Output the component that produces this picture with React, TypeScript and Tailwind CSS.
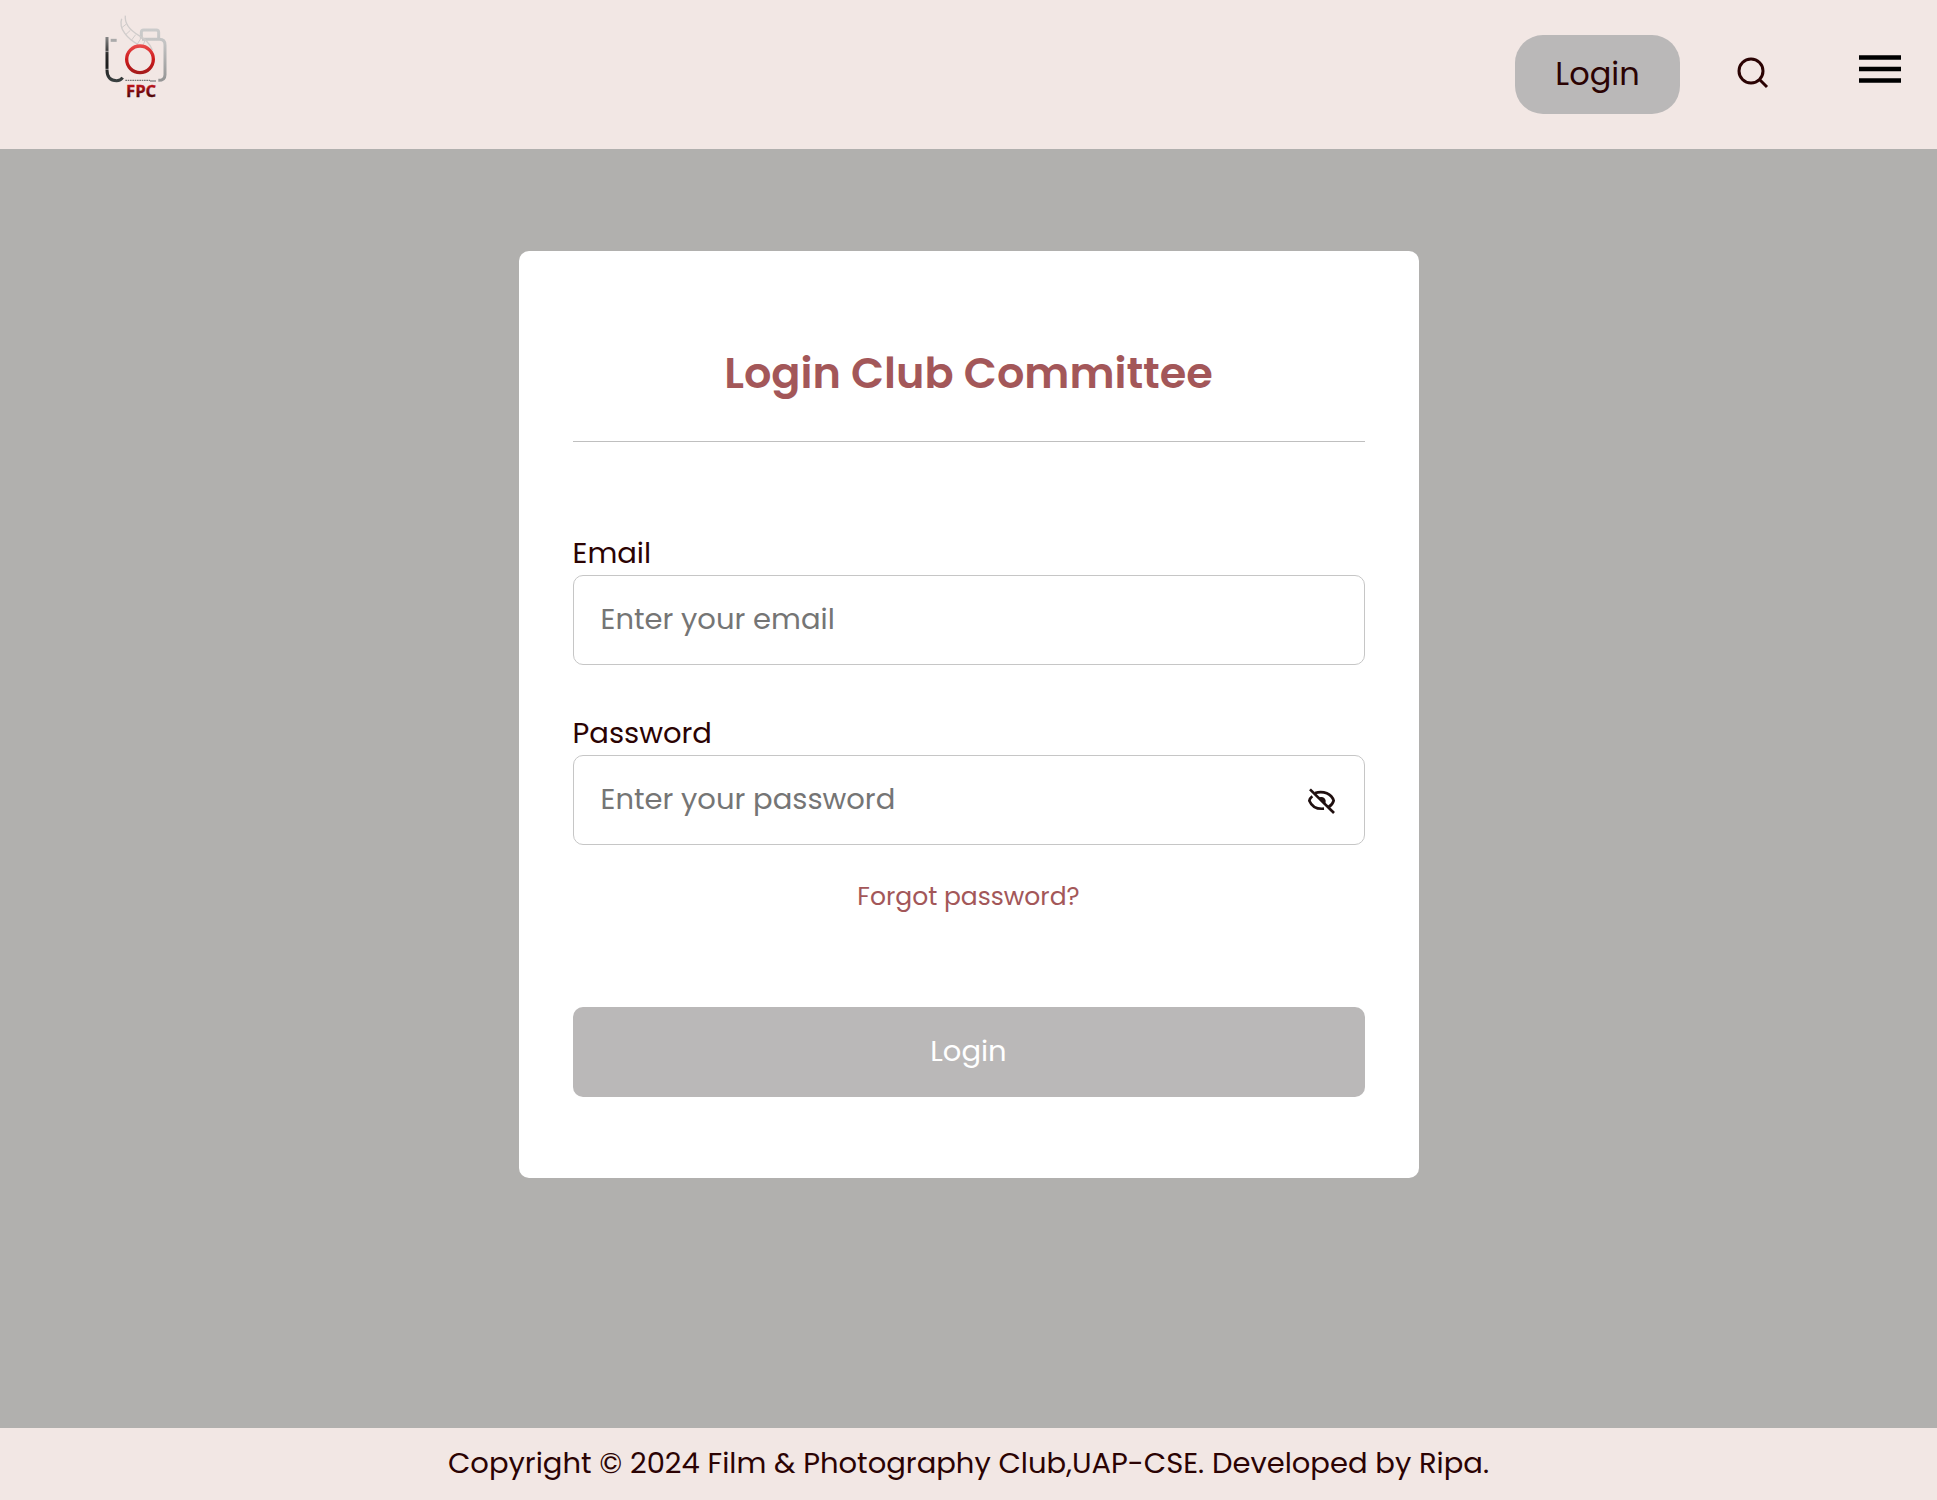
import { useState } from 'react';

function Logo() {
  return (
    <svg viewBox="0 0 300 330" className="h-[110px] w-[100px]" role="img" aria-label="FPC">
      <defs>
        <linearGradient id="leftBar" x1="0" y1="110" x2="0" y2="245" gradientUnits="userSpaceOnUse">
          <stop offset="0" stopColor="#888" />
          <stop offset="0.4" stopColor="#2a2a2a" />
          <stop offset="0.65" stopColor="#1c1c1c" />
          <stop offset="1" stopColor="#3b4242" />
        </linearGradient>
        <linearGradient id="body" x1="0" y1="85" x2="0" y2="245" gradientUnits="userSpaceOnUse">
          <stop offset="0" stopColor="#cccccc" />
          <stop offset="0.3" stopColor="#c2c2c2" />
          <stop offset="1" stopColor="#949494" />
        </linearGradient>
        <linearGradient id="ring" x1="0" y1="135" x2="0" y2="222" gradientUnits="userSpaceOnUse">
          <stop offset="0" stopColor="#ea4a4a" />
          <stop offset="0.5" stopColor="#cc1a1c" />
          <stop offset="1" stopColor="#a31a1a" />
        </linearGradient>
        <linearGradient id="letters" x1="0" y1="253" x2="0" y2="291" gradientUnits="userSpaceOnUse">
          <stop offset="0" stopColor="#c4161b" />
          <stop offset="1" stopColor="#4a0506" />
        </linearGradient>
      </defs>
      <path d="M154 116V97q0-7 7-7h38q7 0 7 7v19" fill="none" stroke="url(#body)" strokeWidth="9" />
      <path d="M156 118h52q17 0 17 17v89q0 17-20 17" fill="none" stroke="url(#body)" strokeWidth="9" />
      <g fill="none" stroke="#d0cccb" strokeWidth="4">
        <path d="M106 47C103 74 122 92 146 106C166 117 180 130 187 150" />
        <path d="M95 56C85 86 112 116 145 134" />
        <path d="M94 84l14-11M107 104l14-13M124 121l13-17M142 132l12-19M160 134l6-16" strokeWidth="3" />
      </g>
      <path d="M51 111v99q0 32 29 32q12 0 18-9" fill="none" stroke="url(#leftBar)" strokeWidth="9" />
      <path d="M45 154h12M45 208h12" stroke="#d8d0d0" strokeWidth="2" />
      <path d="M62 121h18" stroke="#aaa" strokeWidth="9" />
      <circle cx="150" cy="178" r="40" fill="none" stroke="url(#ring)" strokeWidth="10" />
      <path d="M106 241h74" stroke="#777" strokeWidth="4" strokeDasharray="5 2" />
      <path d="M180 243h18" stroke="#999" strokeWidth="5" />
      <text x="108" y="290" fontFamily="'Open Sans', sans-serif" fontWeight="700" fontSize="50" fill="url(#letters)" stroke="url(#letters)" strokeWidth="1">FPC</text>
    </svg>
  );
}

function SearchIcon() {
  return (
    <svg viewBox="0 0 32 32" className="size-8" fill="none" stroke="#2b0303" strokeWidth="3" aria-hidden="true">
      <circle cx="14" cy="14" r="12" />
      <path d="M22 22l8 8" />
    </svg>
  );
}

function MenuIcon() {
  return (
    <svg viewBox="0 0 42 30" className="h-[30px] w-[42px]" stroke="#000" strokeWidth="4.5" aria-hidden="true">
      <path d="M0 3.5h42M0 15h42M0 26.5h42" />
    </svg>
  );
}

function EyeOffIcon() {
  return (
    <svg viewBox="48 50 90 90" className="size-[30px]" fill="none" stroke="#1f0f0f" strokeWidth="8" aria-hidden="true">
      <path d="M57 60l72 71" />
      <path d="M72 71C98 63 122 74 128 94C126 102 121 108 113 113" />
      <path d="M64 81C59 85 56 89 55 94C62 111 78 120 99 118" />
      <path d="M82 87C89 79 103 83 104 94C104 99 103 102 101 105z" fill="#1f0f0f" stroke="none" />
    </svg>
  );
}

const inputClass =
  'h-[90px] w-full rounded-[10px] border border-[#c6c6c6] bg-white px-[27px] pb-0.5 text-[29px] text-[#2b0303] outline-none placeholder:text-[#757575]';

export default function App() {
  const [visible, setVisible] = useState(false);
  return (
    <div className="flex min-h-screen flex-col bg-[#b1b0ae] font-['Poppins',Inter,sans-serif] text-[#2b0303]">
      <header className="flex h-[149px] items-start justify-between bg-[#f2e7e4] pr-9 pl-[90px]">
        <a href="#home">
          <Logo />
        </a>
        <div className="flex items-center pt-[35px]">
          <button type="button" className="h-[79px] w-[165px] rounded-[28px] bg-[#bab8b8] pb-0.5 text-[32px]">
            Login
          </button>
          <button type="button" aria-label="Search" className="mb-1 ml-[57px]">
            <SearchIcon />
          </button>
          <button type="button" aria-label="Menu" className="mb-3 ml-[90px]">
            <MenuIcon />
          </button>
        </div>
      </header>

      <main className="flex flex-1 items-start justify-center pt-[102px] pb-12">
        <form className="flex w-full max-w-[900px] flex-col rounded-[10px] bg-white px-[54px] pt-[89px] pb-[81px]" onSubmit={(e) => e.preventDefault()}>
          <h1 className="border-b border-[#bfbfbf] pb-[35px] text-center text-[43px] leading-[66px] font-semibold text-[#a35759]">
            Login Club Committee
          </h1>
          <label htmlFor="email" className="mt-[89px] text-[29px] leading-[44px]">
            Email
          </label>
          <input id="email" type="email" placeholder="Enter your email" className={inputClass} />
          <label htmlFor="password" className="mt-[46px] text-[29px] leading-[44px]">
            Password
          </label>
          <div className="relative">
            <input id="password" type={visible ? 'text' : 'password'} placeholder="Enter your password" className={inputClass} />
            <button
              type="button"
              aria-label="Show password"
              onClick={() => setVisible(!visible)}
              className="absolute inset-y-0 right-7 flex items-center pt-0.5"
            >
              <EyeOffIcon />
            </button>
          </div>
          <a href="#forgot" className="mt-8 self-center text-[25px] leading-10 text-[#a35759]">
            Forgot password?
          </a>
          <button type="submit" className="mt-[90px] h-[90px] rounded-[10px] bg-[#bab8b8] text-[29px] text-white">
            Login
          </button>
        </form>
      </main>

      <footer className="flex h-[72px] items-center justify-center bg-[#f2e7e4] text-[29px]">
        <p>Copyright © 2024 Film &amp; Photography Club,UAP-CSE. Developed by Ripa.</p>
      </footer>
    </div>
  );
}
